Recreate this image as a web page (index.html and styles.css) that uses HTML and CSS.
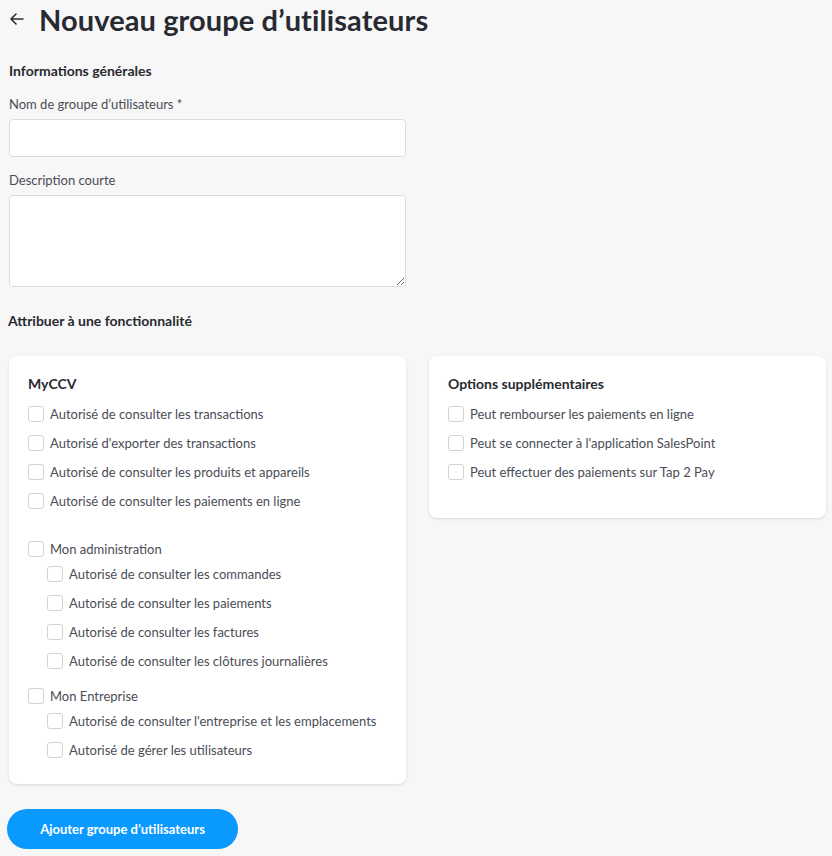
FILE: index.html
```html
<!DOCTYPE html>
<html lang="fr">
<head>
<meta charset="utf-8">
<title>Nouveau groupe d’utilisateurs</title>
<link rel="stylesheet" href="styles.css">
</head>
<body>
<div class="page">
  <header class="page-header">
    <button class="back" aria-label="Retour">
      <svg width="14" height="12" viewBox="0 0 14 12" fill="none" stroke="#2b2e35" stroke-width="1.6" stroke-linecap="round" stroke-linejoin="round"><path d="M13 6H1.5M6 1L1 6l5 5"/></svg>
    </button>
    <h1 class="title">Nouveau groupe d’utilisateurs</h1>
  </header>

  <section class="general">
    <h2 class="section-title">Informations générales</h2>
    <label class="field">
      <span class="field-label">Nom de groupe d’utilisateurs *</span>
      <input class="input" type="text">
    </label>
    <label class="field">
      <span class="field-label">Description courte</span>
      <textarea class="textarea"></textarea>
    </label>
  </section>

  <h2 class="section-title assign">Attribuer à une fonctionnalité</h2>

  <div class="cards">
    <div class="card">
      <h3 class="card-title">MyCCV</h3>
      <div class="group">
        <label class="check"><span class="box"></span>Autorisé de consulter les transactions</label>
        <label class="check"><span class="box"></span>Autorisé d'exporter des transactions</label>
        <label class="check"><span class="box"></span>Autorisé de consulter les produits et appareils</label>
        <label class="check"><span class="box"></span>Autorisé de consulter les paiements en ligne</label>
      </div>
      <div class="group parent first-parent">
        <label class="check"><span class="box"></span>Mon administration</label>
        <div class="children">
          <label class="check"><span class="box"></span>Autorisé de consulter les commandes</label>
          <label class="check"><span class="box"></span>Autorisé de consulter les paiements</label>
          <label class="check"><span class="box"></span>Autorisé de consulter les factures</label>
          <label class="check"><span class="box"></span>Autorisé de consulter les clôtures journalières</label>
        </div>
      </div>
      <div class="group parent">
        <label class="check"><span class="box"></span>Mon Entreprise</label>
        <div class="children">
          <label class="check"><span class="box"></span>Autorisé de consulter l'entreprise et les emplacements</label>
          <label class="check"><span class="box"></span>Autorisé de gérer les utilisateurs</label>
        </div>
      </div>
    </div>

    <div class="card card-small">
      <h3 class="card-title">Options supplémentaires</h3>
      <div class="group">
        <label class="check"><span class="box"></span>Peut rembourser les paiements en ligne</label>
        <label class="check"><span class="box"></span>Peut se connecter à l'application SalesPoint</label>
        <label class="check"><span class="box"></span>Peut effectuer des paiements sur Tap 2 Pay</label>
      </div>
    </div>
  </div>

  <button class="primary">Ajouter groupe d’utilisateurs</button>
</div>
</body>
</html>
```

FILE: styles.css
```css
* { box-sizing: border-box; }
html, body { margin: 0; padding: 0; }
body {
  background: #f7f7f7;
  font-family: "Source Sans Pro", Lato, "Liberation Sans", sans-serif;
  color: #3c3f45;
  font-size: 13px;
}
.page {
  padding: 0 7px 0 9px;
  width: 832px;
}
.page-header {
  display: flex;
  align-items: center;
  height: 38px;
  gap: 15px;
}
.back {
  border: 0;
  background: none;
  padding: 0;
  margin-left: 1px;
  display: flex;
  align-items: center;
  cursor: pointer;
}
.title {
  margin: 0;
  font-family: Lato, "Liberation Sans", sans-serif;
  font-weight: 700;
  font-size: 29px;
  color: #272a31;
  letter-spacing: 0.1px;
}
.section-title {
  margin: 0;
  font-family: Lato, "Liberation Sans", sans-serif;
  font-weight: 700;
  font-size: 14px;
  color: #272a31;
}
.general {
  width: 397px;
  padding-top: 24px;
}
.field {
  display: flex;
  flex-direction: column;
  margin-top: 17px;
}
.field + .field { margin-top: 15px; }
.field-label {
  font-size: 13px;
  color: #4a4d55;
  line-height: 16px;
  margin-bottom: 7px;
}
.input {
  height: 38px;
  border: 1px solid #dcdcdc;
  border-radius: 4px;
  background: #fff;
  font: inherit;
}
.textarea {
  height: 92px;
  border: 1px solid #dcdcdc;
  border-radius: 4px;
  background: #fff;
  font: inherit;
  resize: vertical;
}
.assign {
  margin-top: 25px;
  margin-left: -1px;
}
.cards {
  display: grid;
  grid-template-columns: 397px 397px;
  gap: 23px;
  align-items: start;
  margin-top: 27px;
}
.card {
  background: #fff;
  border-radius: 8px;
  box-shadow: 0 1px 3px rgba(0,0,0,0.12);
  padding: 19px 19px 20px 19px;
}
.card-small { padding-bottom: 32px; }
.card-title {
  margin: 0 0 6px;
  font-family: Lato, "Liberation Sans", sans-serif;
  font-weight: 700;
  font-size: 14px;
  line-height: 18px;
  color: #272a31;
}
.group { display: flex; flex-direction: column; }
.check {
  display: flex;
  align-items: center;
  gap: 6px;
  height: 29px;
  color: #4a4d55;
  font-size: 13px;
  white-space: nowrap;
}
.box {
  width: 16px;
  height: 16px;
  border: 1px solid #d2d2d2;
  border-radius: 3px;
  background: #fff;
  flex: none;
}
.parent { margin-top: 6px; }
.first-parent { margin-top: 19px; }
.children { padding-left: 19px; margin-top: -4px; }
.primary {
  margin-top: 25px;
  margin-left: -2px;
  width: 231px;
  height: 40px;
  border: 0;
  border-radius: 20px;
  background: #0a99ff;
  color: #fff;
  font-family: "Source Sans Pro", Lato, "Liberation Sans", sans-serif;
  font-weight: 700;
  font-size: 13px;
  cursor: pointer;
}
```
